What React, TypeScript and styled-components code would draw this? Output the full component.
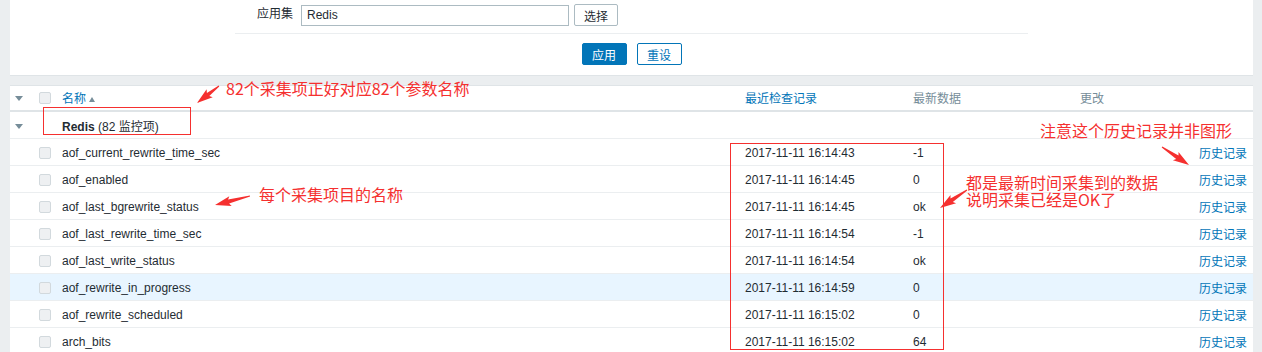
import React from "react"
import styled, { createGlobalStyle } from "styled-components"

const UI_FONT = `"Liberation Sans", Arial, "Noto Sans CJK SC", sans-serif`
const RED = "#f5302f"

const GlobalStyle = createGlobalStyle`
    html, body {
        margin: 0;
        padding: 0;
        background: #ebeef0;
    }
    body {
        font-family: ${UI_FONT};
        font-size: 12px;
        color: #1f2c33;
    }
`

const Page = styled.div`
    position: relative;
    width: 1262px;
    height: 352px;
    overflow: hidden;
    padding: 0 9px 0 10px;
    box-sizing: border-box;
`

const FilterPanel = styled.div`
    background: #fff;
    border-bottom: 1px solid #dfe4e7;
    height: 75px;
    display: flex;
    flex-direction: column;
    align-items: center;
`

const FilterBody = styled.div`
    width: 793px;
    border-bottom: 1px solid #ebeef0;
    padding: 4px 0 7px 22px;
    box-sizing: border-box;
    display: flex;
    align-items: center;
`

const FilterLabel = styled.label`
    width: 44px;
    margin-top: -2px;
    align-self: flex-start;
    padding-top: 2px;
`

const TextInput = styled.div`
    width: 268px;
    height: 21px;
    border: 1px solid #acbbc2;
    box-sizing: border-box;
    padding: 0 5px;
    line-height: 19px;
    margin-top: 1px;
`

const Button = styled.button<{ primary?: boolean; outline?: boolean }>`
    font-family: ${UI_FONT};
    font-size: 12px;
    height: 22px;
    width: 45px;
    border-radius: 2px;
    box-sizing: border-box;
    cursor: pointer;
    padding: 0;
    background: ${p => (p.primary ? "#0275b8" : "#fff")};
    color: ${p => (p.primary ? "#fff" : p.outline ? "#0275b8" : "#1f2c33")};
    border: 1px solid ${p => (p.primary ? "#0275b8" : p.outline ? "#0275b8" : "#acbbc2")};
`

const SelectButton = styled(Button)`
    margin-left: 5px;
    width: 44px;
    height: 22px;
`

const ButtonRow = styled.div`
    display: flex;
    gap: 10px;
    margin-top: 9px;
`

const TablePanel = styled.div`
    margin-top: 9px;
    background: #fff;
    border-top: 1px solid #dfe4e7;
`

const Table = styled.table`
    width: 100%;
    border-collapse: collapse;
    table-layout: fixed;
`

const HeadCell = styled.th<{ link?: boolean; right?: boolean }>`
    font-weight: normal;
    text-align: ${p => (p.right ? "right" : "left")};
    color: ${p => (p.link ? "#0275b8" : "#768d99")};
    height: 23px;
    padding: 0 6px 1px;
    border-bottom: 2px solid #dfe4e7;
    white-space: nowrap;
`

const Row = styled.tr<{ hl?: boolean }>`
    background: ${p => (p.hl ? "#e8f5ff" : "#fff")};
    border-bottom: 1px solid #ebeef0;
`

const Cell = styled.td<{ right?: boolean }>`
    height: 25px;
    padding: 1px 6px 0;
    text-align: ${p => (p.right ? "right" : "left")};
    white-space: nowrap;
`

const Toggle = styled.span`
    display: inline-block;
    width: 0;
    height: 0;
    border-left: 4px solid transparent;
    border-right: 4px solid transparent;
    border-top: 5px solid #768d99;
    vertical-align: middle;
    margin-left: -1px;
`

const CheckBox = styled.span`
    display: inline-block;
    width: 10px;
    height: 10px;
    border: 1px solid #d2d9dd;
    border-radius: 2px;
    background: #eef0f2;
    vertical-align: middle;
`

const SortArrow = styled.span`
    display: inline-block;
    width: 0;
    height: 0;
    border-left: 3px solid transparent;
    border-right: 3px solid transparent;
    border-bottom: 5px solid #768d99;
    margin-left: 3px;
    vertical-align: middle;
`

const Link = styled.a`
    color: #0275b8;
    text-decoration: none;
`

const Annotation = styled.div<{ x: number; y: number }>`
    position: absolute;
    left: ${p => p.x}px;
    top: ${p => p.y}px;
    color: ${RED};
    font-family: "Noto Sans CJK SC", "Liberation Sans", sans-serif;
    font-size: 16px;
    line-height: 17px;
    white-space: nowrap;
`

const RedBox = styled.div<{ x: number; y: number; w: number; h: number }>`
    position: absolute;
    left: ${p => p.x}px;
    top: ${p => p.y}px;
    width: ${p => p.w}px;
    height: ${p => p.h}px;
    border: 1px solid ${RED};
    box-sizing: border-box;
`

const Overlay = styled.svg`
    position: absolute;
    left: 0;
    top: 0;
    pointer-events: none;
`

const rows = [
    { name: "aof_current_rewrite_time_sec", time: "2017-11-11 16:14:43", value: "-1" },
    { name: "aof_enabled", time: "2017-11-11 16:14:45", value: "0" },
    { name: "aof_last_bgrewrite_status", time: "2017-11-11 16:14:45", value: "ok" },
    { name: "aof_last_rewrite_time_sec", time: "2017-11-11 16:14:54", value: "-1" },
    { name: "aof_last_write_status", time: "2017-11-11 16:14:54", value: "ok" },
    { name: "aof_rewrite_in_progress", time: "2017-11-11 16:14:59", value: "0", hl: true },
    { name: "aof_rewrite_scheduled", time: "2017-11-11 16:15:02", value: "0" },
    { name: "arch_bits", time: "2017-11-11 16:15:02", value: "64" },
]

// tapered arrow: thin tail widening into a filled head
const arrowPath = (x1: number, y1: number, x2: number, y2: number) => {
    const dx = x2 - x1
    const dy = y2 - y1
    const len = Math.sqrt(dx * dx + dy * dy)
    const ux = dx / len
    const uy = dy / len
    const nx = -uy
    const ny = ux
    const head = 14
    const bx = x2 - ux * head
    const by = y2 - uy * head
    const pts = [
        [x1 + nx * 0.5, y1 + ny * 0.5],
        [bx + nx * 2, by + ny * 2],
        [bx - ux * 2 + nx * 5, by - uy * 2 + ny * 5],
        [x2, y2],
        [bx - ux * 2 - nx * 5, by - uy * 2 - ny * 5],
        [bx - nx * 2, by - ny * 2],
        [x1 - nx * 0.5, y1 - ny * 0.5],
    ]
    return pts.map(p => p.map(v => v.toFixed(1)).join(",")).join(" ")
}

const arrows = [
    [219, 86, 197, 103],
    [250, 196, 215, 205],
    [1162, 147, 1189, 165],
    [967, 190, 940, 208],
]

const App: React.FC = () => {
    return <>
        <GlobalStyle />
        <Page>
            <FilterPanel>
                <FilterBody>
                    <FilterLabel>应用集</FilterLabel>
                    <TextInput>Redis</TextInput>
                    <SelectButton>选择</SelectButton>
                </FilterBody>
                <ButtonRow>
                    <Button primary>应用</Button>
                    <Button outline>重设</Button>
                </ButtonRow>
            </FilterPanel>
            <TablePanel>
                <Table>
                    <colgroup>
                        <col style={{ width: 23 }} />
                        <col style={{ width: 23 }} />
                        <col style={{ width: 683 }} />
                        <col style={{ width: 168 }} />
                        <col style={{ width: 167 }} />
                        <col style={{ width: 80 }} />
                        <col />
                    </colgroup>
                    <thead>
                        <tr>
                            <HeadCell><Toggle /></HeadCell>
                            <HeadCell><CheckBox /></HeadCell>
                            <HeadCell link>名称<SortArrow /></HeadCell>
                            <HeadCell link>最近检查记录</HeadCell>
                            <HeadCell>最新数据</HeadCell>
                            <HeadCell>更改</HeadCell>
                            <HeadCell />
                        </tr>
                    </thead>
                    <tbody>
                        <Row>
                            <Cell><Toggle /></Cell>
                            <Cell />
                            <Cell colSpan={5}><b>Redis</b> (82 监控项)</Cell>
                        </Row>
                        {rows.map(r => (
                            <Row key={r.name} hl={r.hl}>
                                <Cell />
                                <Cell><CheckBox /></Cell>
                                <Cell>{r.name}</Cell>
                                <Cell>{r.time}</Cell>
                                <Cell>{r.value}</Cell>
                                <Cell />
                                <Cell right><Link href="#">历史记录</Link></Cell>
                            </Row>
                        ))}
                    </tbody>
                </Table>
            </TablePanel>

            <RedBox x={43} y={107} w={148} h={28} />
            <RedBox x={730} y={143} w={214} h={207} />
            <Annotation x={226} y={80}>82个采集项正好对应82个参数名称</Annotation>
            <Annotation x={259} y={186}>每个采集项目的名称</Annotation>
            <Annotation x={1040} y={122}>注意这个历史记录并非图形</Annotation>
            <Annotation x={966} y={174}>都是最新时间采集到的数据<br />说明采集已经是OK了</Annotation>
            <Overlay width={1262} height={352}>
                {arrows.map((a, i) => (
                    <polygon key={i} points={arrowPath(a[0], a[1], a[2], a[3])} fill={RED} />
                ))}
            </Overlay>
        </Page>
    </>
}

export default App
